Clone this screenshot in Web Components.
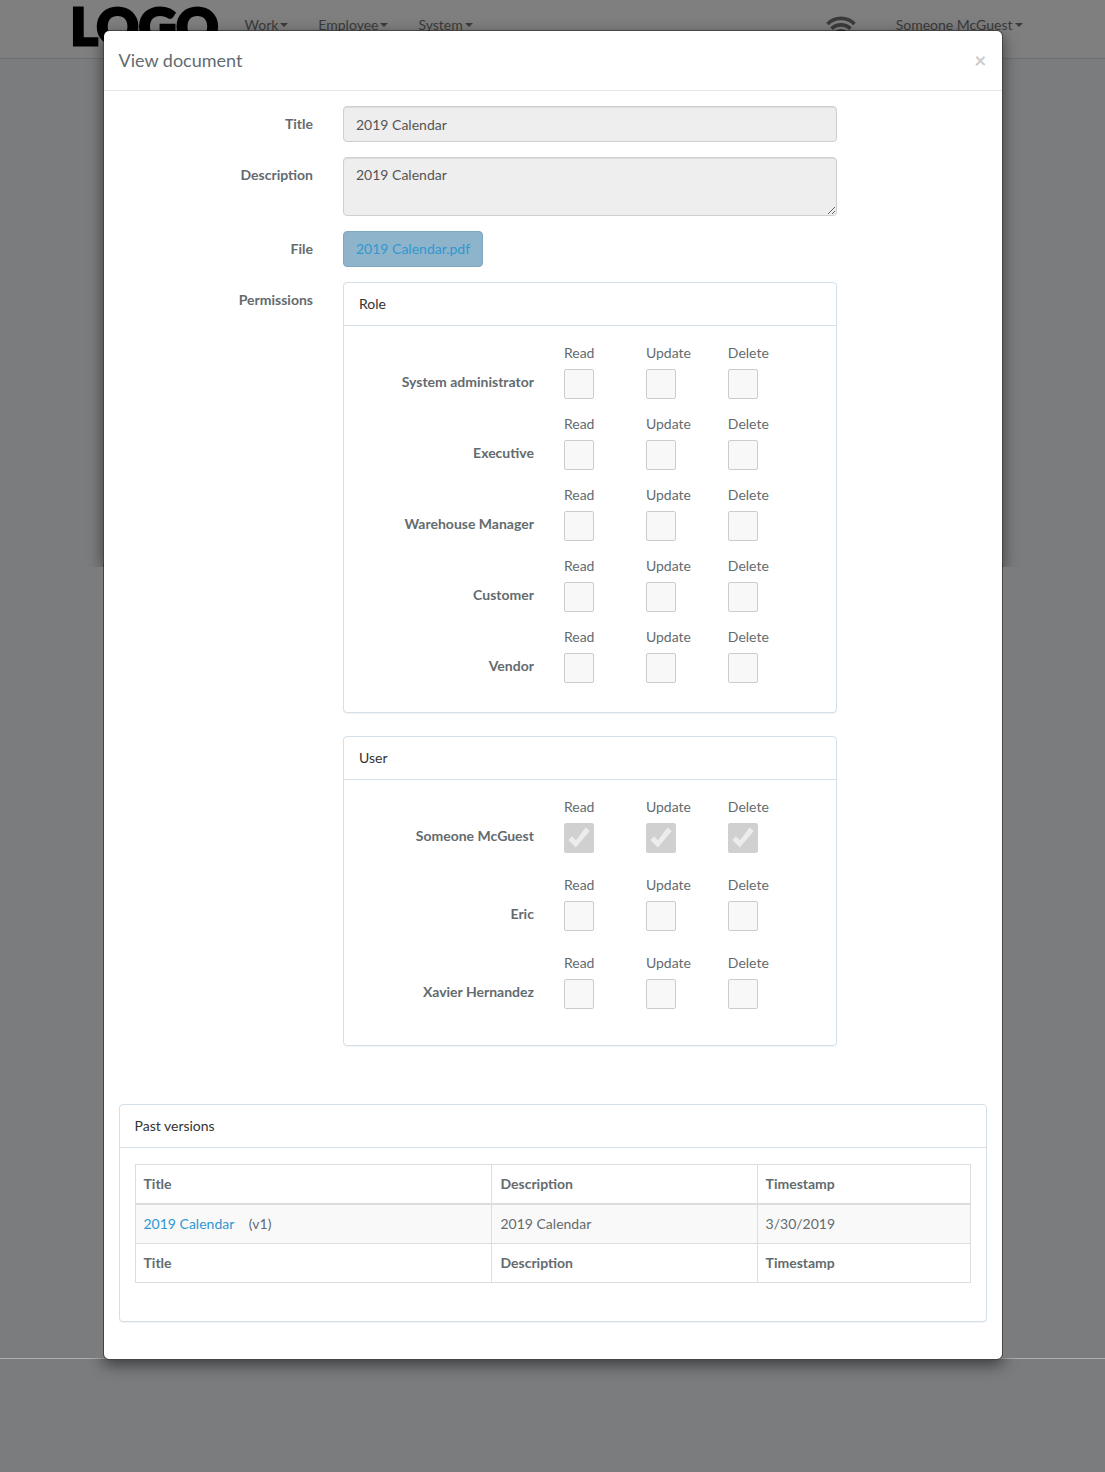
<!DOCTYPE html>
<html lang="en">
<head>
<meta charset="utf-8">
<meta name="viewport" content="width=device-width, initial-scale=1">
<title>View document</title>
<style>
  body {
    margin: 0;
    font: 14px/22px Lato, "Liberation Sans", sans-serif;
    color: #636b6f;
    background: #f5f8fa;
  }
</style>
</head>
<body>
<app-shell>
  <nav-bar slot="nav">
    <nav-menu>Work</nav-menu>
    <nav-menu>Employee</nav-menu>
    <nav-menu>System</nav-menu>
    <wifi-status slot="right"></wifi-status>
    <nav-menu slot="right">Someone McGuest</nav-menu>
  </nav-bar>

  <modal-dialog heading="View document">
    <text-field label="Title" value="2019 Calendar"></text-field>
    <text-field label="Description" value="2019 Calendar" multiline></text-field>
    <field-row label="File">
      <file-link href="#file">2019 Calendar.pdf</file-link>
    </field-row>
    <field-row label="Permissions">
      <info-panel heading="Role">
        <permission-row name="System administrator"></permission-row>
        <permission-row name="Executive"></permission-row>
        <permission-row name="Warehouse Manager"></permission-row>
        <permission-row name="Customer"></permission-row>
        <permission-row name="Vendor"></permission-row>
      </info-panel>
      <info-panel heading="User" style="--row-gap: 21px">
        <permission-row name="Someone McGuest" granted></permission-row>
        <permission-row name="Eric"></permission-row>
        <permission-row name="Xavier Hernandez"></permission-row>
      </info-panel>
    </field-row>
    <info-panel slot="footer" heading="Past versions">
      <version-table></version-table>
    </info-panel>
  </modal-dialog>
</app-shell>

<script>
class BaseElement extends HTMLElement {
  connectedCallback() {
    if (this.shadowRoot) return;
    this.attachShadow({ mode: "open" }).innerHTML = this.render();
  }

  attr(name) {
    return this.getAttribute(name) || "";
  }
}

// navbar and dialog share one grid cell, with the backdrop between them
class AppShell extends BaseElement {
  render() {
    return `
      <style>
        :host {
          display: grid;
          grid-template-columns: minmax(0, 1fr);
          min-height: 100vh;
        }
        .nav, .backdrop, .stage {
          grid-area: 1 / 1;
        }
        .backdrop {
          background: rgba(0, 0, 0, .5);
          z-index: 1;
        }
        .stage {
          z-index: 2;
          align-self: start;
          border-bottom: 1px solid #afafaf;
          padding-top: 30px;
        }
      </style>
      <div class="nav"><slot name="nav"></slot></div>
      <div class="backdrop"></div>
      <div class="stage"><slot></slot></div>
    `;
  }
}

class NavBar extends BaseElement {
  render() {
    return `
      <style>
        :host {
          display: block;
          background: #fff;
          border-bottom: 1px solid #d3e0e9;
        }
        nav {
          display: flex;
          align-items: flex-start;
          box-sizing: border-box;
          max-width: 970px;
          height: 58px;
          margin: 0 auto;
        }
        .brand {
          flex: none;
          box-sizing: border-box;
          width: 162px;
          padding-left: 3px;
          font-size: 52px;
          font-weight: 900;
          line-height: 50px;
          color: #000;
          text-decoration: none;
          -webkit-text-stroke: 3px #000;
        }
        .right {
          display: flex;
          align-items: flex-start;
          gap: 11px;
          margin-left: auto;
        }
      </style>
      <nav>
        <a class="brand" href="#home">LOGO</a>
        <slot></slot>
        <div class="right"><slot name="right"></slot></div>
      </nav>
    `;
  }
}

class NavMenu extends BaseElement {
  render() {
    return `
      <style>
        :host { display: block; }
        a {
          display: flex;
          align-items: center;
          gap: 2px;
          padding: 14px 15px;
          color: #777;
          text-decoration: none;
        }
        .caret {
          border-top: 4px solid;
          border-left: 4px solid transparent;
          border-right: 4px solid transparent;
        }
      </style>
      <a href="#menu"><slot></slot><span class="caret"></span></a>
    `;
  }
}

class WifiStatus extends BaseElement {
  render() {
    return `
      <style>
        :host { display: block; padding: 16px 14px 0; }
        svg { display: block; }
      </style>
      <svg width="30" height="24" viewBox="0 0 30 24" fill="none" stroke="#777" stroke-width="3.6">
        <path d="M1.5 8A19 19 0 0 1 28.5 8"/>
        <path d="M5.5 12.8A13.5 13.5 0 0 1 24.5 12.8"/>
        <path d="M9.5 17A8 8 0 0 1 20.5 17"/>
        <circle cx="15" cy="21" r="2.4" fill="#777" stroke="none"/>
      </svg>
    `;
  }
}

class ModalDialog extends BaseElement {
  render() {
    return `
      <style>
        :host {
          display: block;
          position: relative;
          box-sizing: border-box;
          max-width: 900px;
          margin: 0 auto -2px;
          border: 1px solid rgba(0, 0, 0, .45);
          border-radius: 6px;
          background: #fff;
          background-clip: padding-box;
        }
        /* shadow only at the two ends of the dialog */
        :host::before, :host::after {
          content: "";
          position: absolute;
          left: -1px;
          right: -1px;
          z-index: -1;
          border-radius: 6px;
          box-shadow: 0 5px 15px rgba(0, 0, 0, .5);
          pointer-events: none;
        }
        :host::before {
          top: -1px;
          height: 537px;
          clip-path: inset(-30px -30px 0 -30px);
        }
        :host::after {
          bottom: -1px;
          height: 40px;
          clip-path: inset(38px -30px -30px -30px);
        }
        header {
          display: flex;
          align-items: flex-start;
          justify-content: space-between;
          padding: 15px;
          border-bottom: 1px solid #e5e5e5;
        }
        h4 {
          margin: 0;
          font-size: 18px;
          font-weight: 400;
          line-height: 29px;
        }
        button {
          padding: 0;
          border: 0;
          background: none;
          font: bold 21px/27px Lato, "Liberation Sans", sans-serif;
          color: #000;
          opacity: .2;
          cursor: pointer;
        }
        .fields {
          display: grid;
          gap: 15px;
          padding: 15px 0;
        }
        .footer {
          padding: 43px 15px 37px;
        }
      </style>
      <header>
        <h4>${this.attr("heading")}</h4>
        <button type="button">×</button>
      </header>
      <div class="fields"><slot></slot></div>
      <div class="footer"><slot name="footer"></slot></div>
    `;
  }
}

const rowStyles = `
  :host {
    display: grid;
    grid-template-columns: minmax(0, 3fr) minmax(0, 7fr) minmax(0, 2fr);
  }
  .label {
    padding: 7px 15px 0;
    font-weight: 700;
    text-align: right;
  }
  .field {
    display: grid;
    gap: 23px;
    padding: 0 15px;
  }
`;

class FieldRow extends BaseElement {
  render() {
    return `
      <style>${rowStyles}</style>
      <div class="label">${this.attr("label")}</div>
      <div class="field"><slot></slot></div>
    `;
  }
}

class TextField extends BaseElement {
  render() {
    const control = this.hasAttribute("multiline")
      ? `<textarea id="control" rows="2" readonly>${this.attr("value")}</textarea>`
      : `<input id="control" type="text" value="${this.attr("value")}" readonly>`;

    return `
      <style>
        ${rowStyles}
        input, textarea {
          display: block;
          box-sizing: border-box;
          width: 100%;
          height: 36px;
          margin: 0;
          padding: 6px 12px;
          border: 1px solid #ccd0d2;
          border-radius: 4px;
          background: #eee;
          box-shadow: inset 0 1px 1px rgba(0, 0, 0, .075);
          font: inherit;
          color: #555;
        }
        textarea {
          height: 59px;
          resize: vertical;
        }
      </style>
      <label class="label" for="control">${this.attr("label")}</label>
      <div class="field">${control}</div>
    `;
  }
}

class FileLink extends BaseElement {
  render() {
    return `
      <style>
        :host { display: flex; }
        a {
          padding: 6px 12px;
          border: 1px solid #7da8c3;
          border-radius: 4px;
          background: #8eb4cb;
          color: #3097d1;
          text-decoration: none;
        }
      </style>
      <a href="${this.attr("href")}"><slot></slot></a>
    `;
  }
}

class InfoPanel extends BaseElement {
  render() {
    return `
      <style>
        :host {
          display: block;
          border: 1px solid #d3e0e9;
          border-radius: 4px;
          background: #fff;
          box-shadow: 0 1px 1px rgba(0, 0, 0, .05);
        }
        .heading {
          padding: 10px 15px;
          border-bottom: 1px solid #d3e0e9;
          color: #333;
        }
        .body { padding: 16px 0 15px; }
      </style>
      <div class="heading">${this.attr("heading")}</div>
      <div class="body"><slot></slot></div>
    `;
  }
}

class PermissionRow extends BaseElement {
  render() {
    const checked = this.hasAttribute("granted") ? "checked" : "";
    const boxes = ["Read", "Update", "Delete"]
      .map((action) => `
        <label>
          ${action}
          <span class="box">
            <input type="checkbox" ${checked} disabled>
            <svg width="30" height="30" viewBox="0 0 30 30">
              <path fill="#ececec" d="M4.3 17L8 13.3L12 17.2L21.5 4.6L25.8 8L11.8 24.4Z"/>
            </svg>
          </span>
        </label>`)
      .join("");

    return `
      <style>
        :host {
          display: grid;
          grid-template-columns: minmax(0, 5fr) repeat(3, minmax(0, 2fr)) minmax(0, 1fr);
          margin-bottom: var(--row-gap, 14px);
        }
        .name {
          padding: 29px 15px 0;
          font-weight: 700;
          text-align: right;
        }
        label {
          display: grid;
          gap: 5px;
          padding-left: 15px;
        }
        .box {
          display: grid;
          width: 30px;
        }
        input, svg { grid-area: 1 / 1; }
        input {
          appearance: none;
          box-sizing: border-box;
          width: 30px;
          height: 30px;
          margin: 0;
          border: 1px solid #ccc;
          border-radius: 2px;
          background: #f8f8f8;
        }
        input:checked {
          border-color: #d0d0d0;
          background: #d0d0d0;
        }
        svg { visibility: hidden; }
        input:checked + svg { visibility: visible; }
      </style>
      <div class="name">${this.attr("name")}</div>
      ${boxes}
    `;
  }
}

class VersionTable extends BaseElement {
  render() {
    const titles = `<tr><th>Title</th><th>Description</th><th>Timestamp</th></tr>`;

    return `
      <style>
        :host {
          display: block;
          padding: 0 15px 23px;
        }
        table {
          width: 100%;
          border-collapse: collapse;
          table-layout: fixed;
        }
        .title { width: 42.75%; }
        .description { width: 31.75%; }
        th, td {
          padding: 8px;
          border: 1px solid #ddd;
          text-align: left;
        }
        thead th { border-bottom-width: 2px; }
        tbody tr { background: #f9f9f9; }
        a {
          margin-right: 11px;
          color: #3097d1;
          text-decoration: none;
        }
      </style>
      <table>
        <colgroup><col class="title"><col class="description"><col></colgroup>
        <thead>${titles}</thead>
        <tbody>
          <tr>
            <td><a href="#v1">2019 Calendar</a> (v1)</td>
            <td>2019 Calendar</td>
            <td>3/30/2019</td>
          </tr>
        </tbody>
        <tfoot>${titles}</tfoot>
      </table>
    `;
  }
}

customElements.define("app-shell", AppShell);
customElements.define("nav-bar", NavBar);
customElements.define("nav-menu", NavMenu);
customElements.define("wifi-status", WifiStatus);
customElements.define("modal-dialog", ModalDialog);
customElements.define("field-row", FieldRow);
customElements.define("text-field", TextField);
customElements.define("file-link", FileLink);
customElements.define("info-panel", InfoPanel);
customElements.define("permission-row", PermissionRow);
customElements.define("version-table", VersionTable);
</script>
</body>
</html>
